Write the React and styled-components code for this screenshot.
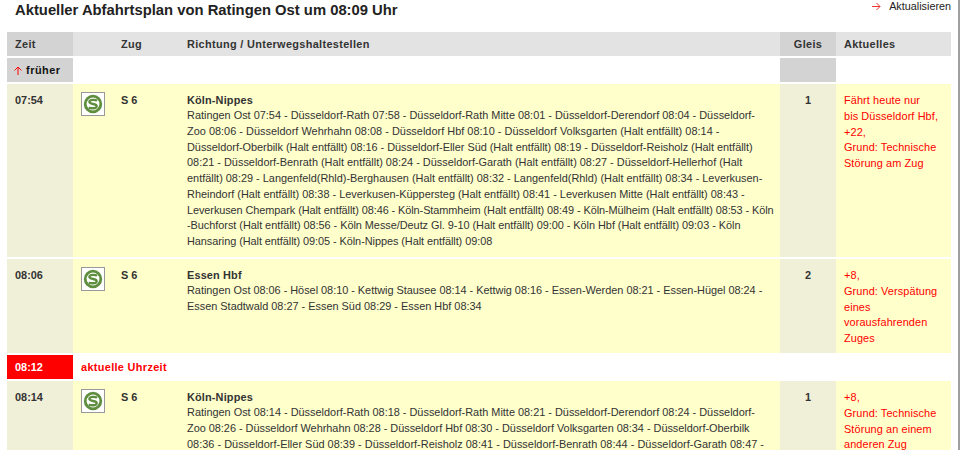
import React from 'react';
import styled, { createGlobalStyle } from 'styled-components';

const GlobalStyle = createGlobalStyle`
  html, body {
    margin: 0;
    padding: 0;
    background: #fff;
    overflow: hidden;
  }
  body {
    font-family: "Liberation Sans", Arial, sans-serif;
    font-size: 10.92px;
    color: #333;
  }
`;

const Page = styled.div`
  width: 960px;
  height: 450px;
  box-sizing: border-box;
  overflow: hidden;
  border-right: 2px solid #a0a0a0;
  padding-left: 7px;
`;

const TitleBar = styled.div`
  width: 944px;
  height: 32px;
  display: flex;
  justify-content: space-between;
  align-items: flex-start;
`;

const Title = styled.h1`
  margin: 0;
  padding: 1px 0 0 8px;
  font-size: 14.8px;
  line-height: 18px;
  font-weight: bold;
  color: #222;
`;

const Refresh = styled.a`
  display: flex;
  align-items: center;
  gap: 8px;
  color: #222;
  font-size: 10.8px;
  line-height: 13px;
`;

const Row = styled.div`
  display: grid;
  grid-template-columns: 66px 40px 66px 601px 56px 115px;
  width: 944px;
  margin-bottom: 2px;
  height: ${p => p.$h}px;
`;

const Cell = styled.div`
  box-sizing: border-box;
  padding: 9px 8px 0;
  background: ${p => p.$bg || '#ffffcc'};
  line-height: 15.75px;
  overflow: hidden;
`;

const IconCell = styled(Cell)`
  padding-top: 8px;
`;

const HeadCell = styled.div`
  box-sizing: border-box;
  padding: 0 8px;
  line-height: 24px;
  font-weight: bold;
  letter-spacing: 0.33px;
  background: ${p => (p.$dark ? '#d3d3d3' : '#e3e3e3')};
  text-align: ${p => p.$align || 'left'};
`;

const Blank = styled.div`
  background: ${p => p.$bg || '#fff'};
  grid-column: ${p => p.$span || 'auto'};
`;

const Earlier = styled.div`
  background: #d3d3d3;
  padding-left: 7px;
  line-height: 24px;
  font-weight: bold;
  letter-spacing: 0.5px;
  color: #111;
  display: flex;
  align-items: center;
  gap: 4px;
`;

const Strong = styled.div`
  font-weight: bold;
  text-align: ${p => p.$align || 'left'};
`;

const Dest = styled.div`
  font-weight: bold;
  letter-spacing: 0.15px;
  line-height: 15px;
`;

const Stops = styled.div`
  color: #333;
  white-space: nowrap;
`;

const StopLine = styled.div`
  letter-spacing: ${p => p.$ls || 0}px;
`;

const Notice = styled.div`
  color: #f00;
  letter-spacing: 0.1px;
  white-space: nowrap;
`;

const NowTime = styled.div`
  background: #f00;
  color: #fff;
  font-weight: bold;
  padding-left: 8px;
  line-height: 24px;
`;

const NowLabel = styled.div`
  grid-column: 2 / span 5;
  color: #f00;
  font-weight: bold;
  letter-spacing: 0.33px;
  padding-left: 8px;
  line-height: 24px;
`;

function SBahnIcon() {
  return (
    <svg width="24" height="24" viewBox="0 0 24 24" style={{ display: 'block' }}>
      <rect x="0.5" y="0.5" width="23" height="23" fill="#fff" stroke="#999" />
      <circle cx="12" cy="12" r="7.8" fill="none" stroke="#5f8f3e" strokeWidth="2.8" />
      <path d="M16 8.8C14.6 7.5 8.6 7.2 8.4 9.9C8.2 12.6 15.8 11.4 15.7 14.2C15.6 16.9 9.4 16.7 7.8 15.3" fill="none" stroke="#5f8f3e" strokeWidth="2.4" />
    </svg>
  );
}

// second value: small spacing correction so a line ends where it does in the plan
const departures = [
  {
    time: '07:54', h: 173, gleis: '1', dest: 'Köln-Nippes',
    stops: [
      ['Ratingen Ost 07:54 - Düsseldorf-Rath 07:58 - Düsseldorf-Rath Mitte 08:01 - Düsseldorf-Derendorf 08:04 - Düsseldorf-'],
      ['Zoo 08:06 - Düsseldorf Wehrhahn 08:08 - Düsseldorf Hbf 08:10 - Düsseldorf Volksgarten (Halt entfällt) 08:14 -', 0.02],
      ['Düsseldorf-Oberbilk (Halt entfällt) 08:16 - Düsseldorf-Eller Süd (Halt entfällt) 08:19 - Düsseldorf-Reisholz (Halt entfällt)', -0.024],
      ['08:21 - Düsseldorf-Benrath (Halt entfällt) 08:24 - Düsseldorf-Garath (Halt entfällt) 08:27 - Düsseldorf-Hellerhof (Halt'],
      ['entfällt) 08:29 - Langenfeld(Rhld)-Berghausen (Halt entfällt) 08:32 - Langenfeld(Rhld) (Halt entfällt) 08:34 - Leverkusen-'],
      ['Rheindorf (Halt entfällt) 08:38 - Leverkusen-Küppersteg (Halt entfällt) 08:41 - Leverkusen Mitte (Halt entfällt) 08:43 -'],
      ['Leverkusen Chempark (Halt entfällt) 08:46 - Köln-Stammheim (Halt entfällt) 08:49 - Köln-Mülheim (Halt entfällt) 08:53 - Köln', -0.08],
      ['-Buchforst (Halt entfällt) 08:56 - Köln Messe/Deutz Gl. 9-10 (Halt entfällt) 09:00 - Köln Hbf (Halt entfällt) 09:03 - Köln', -0.04],
      ['Hansaring (Halt entfällt) 09:05 - Köln-Nippes (Halt entfällt) 09:08', -0.06],
    ],
    notice: ['Fährt heute nur', 'bis Düsseldorf Hbf,', '+22,', 'Grund: Technische', 'Störung am Zug'],
  },
  {
    time: '08:06', h: 94, gleis: '2', dest: 'Essen Hbf',
    stops: [
      ['Ratingen Ost 08:06 - Hösel 08:10 - Kettwig Stausee 08:14 - Kettwig 08:16 - Essen-Werden 08:21 - Essen-Hügel 08:24 -', -0.02],
      ['Essen Stadtwald 08:27 - Essen Süd 08:29 - Essen Hbf 08:34'],
    ],
    notice: ['+8,', 'Grund: Verspätung', 'eines', 'vorausfahrenden', 'Zuges'],
  },
  'now',
  {
    time: '08:14', h: 100, gleis: '1', dest: 'Köln-Nippes',
    stops: [
      ['Ratingen Ost 08:14 - Düsseldorf-Rath 08:18 - Düsseldorf-Rath Mitte 08:21 - Düsseldorf-Derendorf 08:24 - Düsseldorf-'],
      ['Zoo 08:26 - Düsseldorf Wehrhahn 08:28 - Düsseldorf Hbf 08:30 - Düsseldorf Volksgarten 08:34 - Düsseldorf-Oberbilk', -0.02],
      ['08:36 - Düsseldorf-Eller Süd 08:39 - Düsseldorf-Reisholz 08:41 - Düsseldorf-Benrath 08:44 - Düsseldorf-Garath 08:47 -', 0.02],
    ],
    notice: ['+8,', 'Grund: Technische', 'Störung an einem', 'anderen Zug'],
  },
];

export default function App() {
  return (
    <Page>
      <GlobalStyle />
      <TitleBar>
        <Title>Aktueller Abfahrtsplan von Ratingen Ost um 08:09 Uhr</Title>
        <Refresh>
          <svg width="9" height="9" viewBox="0 0 9 9">
            <path d="M0 4.5H8M4.5 1L8 4.5L4.5 8" fill="none" stroke="#e33" strokeWidth="1" />
          </svg>
          Aktualisieren
        </Refresh>
      </TitleBar>
      <Row $h={24}>
        <HeadCell $dark>Zeit</HeadCell>
        <HeadCell />
        <HeadCell>Zug</HeadCell>
        <HeadCell>Richtung / Unterwegshaltestellen</HeadCell>
        <HeadCell $dark $align="center">Gleis</HeadCell>
        <HeadCell>Aktuelles</HeadCell>
      </Row>
      <Row $h={24}>
        <Earlier>
          <svg width="8" height="9" viewBox="0 0 8 9">
            <path d="M4 9V1M0.5 4.5L4 1L7.5 4.5" fill="none" stroke="#f00" strokeWidth="1" />
          </svg>
          früher
        </Earlier>
        <Blank $span="2 / span 3" />
        <Blank $bg="#d3d3d3" />
        <Blank />
      </Row>
      {departures.map(d => d === 'now' ? (
        <Row $h={24} key="now">
          <NowTime>08:12</NowTime>
          <NowLabel>aktuelle Uhrzeit</NowLabel>
        </Row>
      ) : (
        <Row $h={d.h} key={d.time}>
          <Cell $bg="#f0f0d8"><Strong>{d.time}</Strong></Cell>
          <IconCell><SBahnIcon /></IconCell>
          <Cell><Strong>S 6</Strong></Cell>
          <Cell>
            <Dest>{d.dest}</Dest>
            <Stops>{d.stops.map(([text, ls]) => <StopLine key={text} $ls={ls}>{text}</StopLine>)}</Stops>
          </Cell>
          <Cell $bg="#f0f0d8"><Strong $align="center">{d.gleis}</Strong></Cell>
          <Cell><Notice>{d.notice.map(s => <div key={s}>{s}</div>)}</Notice></Cell>
        </Row>
      ))}
    </Page>
  );
}
